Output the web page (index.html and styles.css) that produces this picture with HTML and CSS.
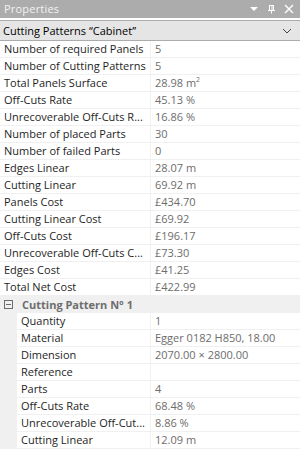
FILE: index.html
```html
<!DOCTYPE html>
<html>
<head>
<meta charset="utf-8">
<link rel="stylesheet" href="styles.css">
</head>
<body>
<div class="panel">
  <div class="titlebar">
    <span class="title">Properties</span>
    <div class="tools">
      <svg width="10" height="8" viewBox="0 0 10 8"><path d="M1 2 L9 2 L5 6 Z" fill="#fff"/></svg>
      <svg width="9" height="10" viewBox="0 0 9 10"><path d="M2 1.5 H7 M2.5 1.5 V6 M6.5 1.5 V6 M1 6.5 H8 M4.5 6.5 V9.5 M5 1.5 V6" stroke="#fff" stroke-width="1" fill="none"/></svg>
      <svg width="10" height="10" viewBox="0 0 10 10"><path d="M1 1 L9 9 M9 1 L1 9" stroke="#fff" stroke-width="1.4"/></svg>
    </div>
  </div>
  <div class="combo">
    <span>Cutting Patterns “Cabinet”</span>
    <svg width="10" height="6" viewBox="0 0 10 6"><path d="M1 1 L5 5 L9 1" stroke="#444" stroke-width="1" fill="none"/></svg>
  </div>
  <div class="grid">
    <div class="row"><div class="name">Number of required Panels</div><div class="val">5</div></div>
    <div class="row"><div class="name">Number of Cutting Patterns</div><div class="val">5</div></div>
    <div class="row"><div class="name">Total Panels Surface</div><div class="val">28.98 m<sup>2</sup></div></div>
    <div class="row"><div class="name">Off-Cuts Rate</div><div class="val">45.13 %</div></div>
    <div class="row"><div class="name">Unrecoverable Off-Cuts R...</div><div class="val">16.86 %</div></div>
    <div class="row"><div class="name">Number of placed Parts</div><div class="val">30</div></div>
    <div class="row"><div class="name">Number of failed Parts</div><div class="val">0</div></div>
    <div class="row"><div class="name">Edges Linear</div><div class="val">28.07 m</div></div>
    <div class="row"><div class="name">Cutting Linear</div><div class="val">69.92 m</div></div>
    <div class="row"><div class="name">Panels Cost</div><div class="val">£434.70</div></div>
    <div class="row"><div class="name">Cutting Linear Cost</div><div class="val">£69.92</div></div>
    <div class="row"><div class="name">Off-Cuts Cost</div><div class="val">£196.17</div></div>
    <div class="row"><div class="name">Unrecoverable Off-Cuts C...</div><div class="val">£73.30</div></div>
    <div class="row"><div class="name">Edges Cost</div><div class="val">£41.25</div></div>
    <div class="row"><div class="name">Total Net Cost</div><div class="val">£422.99</div></div>
    <div class="group">
      <span class="toggle"></span>
      <span class="gtitle">Cutting Pattern N° 1</span>
    </div>
    <div class="row sub"><div class="name">Quantity</div><div class="val">1</div></div>
    <div class="row sub"><div class="name">Material</div><div class="val">Egger 0182 H850, 18.00</div></div>
    <div class="row sub"><div class="name">Dimension</div><div class="val">2070.00 × 2800.00</div></div>
    <div class="row sub"><div class="name">Reference</div><div class="val"></div></div>
    <div class="row sub"><div class="name">Parts</div><div class="val">4</div></div>
    <div class="row sub"><div class="name">Off-Cuts Rate</div><div class="val">68.48 %</div></div>
    <div class="row sub"><div class="name">Unrecoverable Off-Cut...</div><div class="val">8.86 %</div></div>
    <div class="row sub"><div class="name">Cutting Linear</div><div class="val">12.09 m</div></div>
  </div>
</div>
</body>
</html>
```
FILE: styles.css
```css
html, body {
  margin: 0;
  padding: 0;
  background: #ffffff;
}
body {
  font-family: "Open Sans", "Noto Sans", sans-serif;
  font-size: 11px;
  width: 300px;
  height: 449px;
  overflow: hidden;
}
.panel {
  display: flex;
  flex-direction: column;
}
.titlebar {
  height: 18px;
  background: #acacac;
  display: flex;
  align-items: center;
  justify-content: space-between;
  padding: 0 6px 0 4px;
  border-bottom: 2px solid #ffffff;
}
.title {
  color: #f2f2f2;
  font-size: 11px;
  letter-spacing: 0.2px;
  line-height: 18px;
}
.tools {
  display: flex;
  align-items: center;
  gap: 8px;
}
.tools svg {
  display: block;
}
.combo {
  height: 19px;
  background: #e5e5e5;
  border-top: 1px solid #acacac;
  border-bottom: 1px solid #acacac;
  display: flex;
  align-items: center;
  justify-content: space-between;
  padding: 0 8px 0 3px;
  color: #000;
}
.grid {
  display: flex;
  flex-direction: column;
  background: #f0f0f0;
}
.row {
  display: grid;
  grid-template-columns: 151px 1fr;
  height: 16px;
  border-bottom: 1px solid #f0f0f0;
  line-height: 16px;
  background: #ffffff;
}
.name {
  color: #1e1e1e;
  padding-left: 4px;
  white-space: nowrap;
  overflow: hidden;
  text-overflow: ellipsis;
  border-right: 1px solid #f0f0f0;
}
.val {
  color: #6d6d6d;
  padding-left: 4px;
  white-space: nowrap;
  overflow: hidden;
}
.val sup {
  font-size: 7px;
  line-height: 0;
  vertical-align: 5px;
}
.sub {
  margin-left: 17px;
  grid-template-columns: 134px 1fr;
}
.group {
  height: 17px;
  background: #f0f0f0;
  display: flex;
  align-items: center;
  gap: 9px;
  padding-left: 4px;
}
.toggle {
  width: 7px;
  height: 7px;
  border: 1px solid #6d6d6d;
  position: relative;
  background: #f0f0f0;
}
.toggle::after {
  content: "";
  position: absolute;
  left: 1px;
  top: 3px;
  width: 5px;
  height: 1px;
  background: #6d6d6d;
}
.gtitle {
  color: #6d6d6d;
  font-weight: bold;
}
```
